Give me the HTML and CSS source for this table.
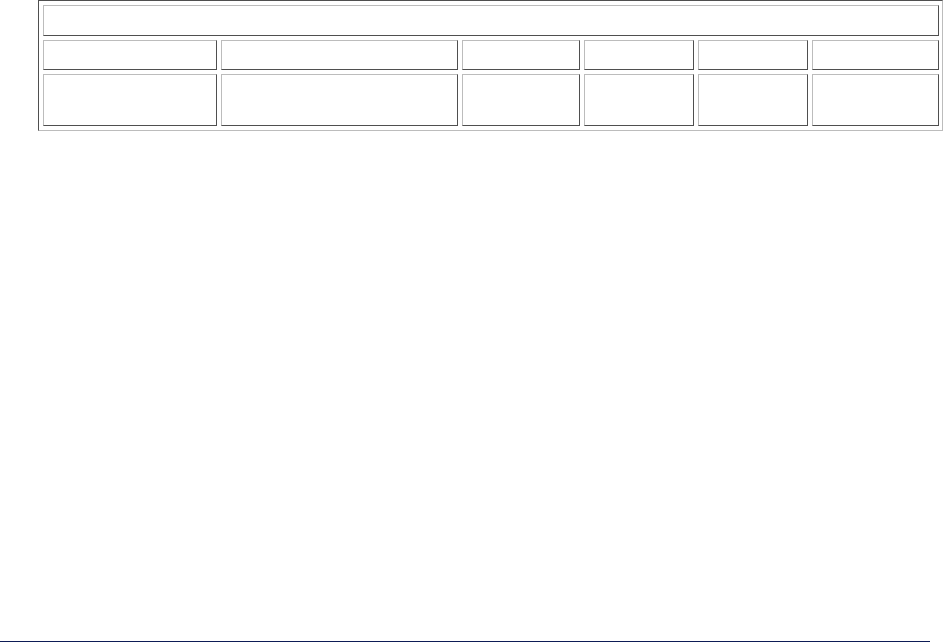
FILE: index.html
```html
<!DOCTYPE html>
<html>
<head>
<meta charset="utf-8">
<link rel="stylesheet" href="styles.css">
</head>
<body>
<div class="page">
  <div class="frame">
    <div class="cell head"></div>
    <div class="cell"></div>
    <div class="cell"></div>
    <div class="cell"></div>
    <div class="cell"></div>
    <div class="cell"></div>
    <div class="cell"></div>
    <div class="cell"></div>
    <div class="cell"></div>
    <div class="cell"></div>
    <div class="cell"></div>
    <div class="cell"></div>
    <div class="cell"></div>
  </div>
  <div class="rule"></div>
</div>
</body>
</html>
```

FILE: styles.css
```css
html, body {
  margin: 0;
  padding: 0;
  background: #ffffff;
  font-family: "Liberation Serif", serif;
}

.page {
  height: 643px;
  display: flex;
  flex-direction: column;
  justify-content: space-between;
  padding-bottom: 1px;
  box-sizing: border-box;
}

.frame {
  margin-left: 38px;
  width: 905px;
  box-sizing: border-box;
  display: grid;
  grid-template-columns: 174px 237px 118px 110px 110px 127px;
  grid-template-rows: 31px 30px 52px;
  gap: 4px;
  padding: 4px 3px 4px 4px;
  border: 1px solid;
  border-color: #4f4f4f #bcbcbc #bcbcbc #4f4f4f;
}

.cell {
  box-sizing: border-box;
  border: 1px solid;
  border-color: #bcbcbc #4f4f4f #4f4f4f #bcbcbc;
}

.head {
  grid-column: 1 / -1;
}

.rule {
  width: 930px;
  height: 1px;
  background: #0d1c56;
}
```
